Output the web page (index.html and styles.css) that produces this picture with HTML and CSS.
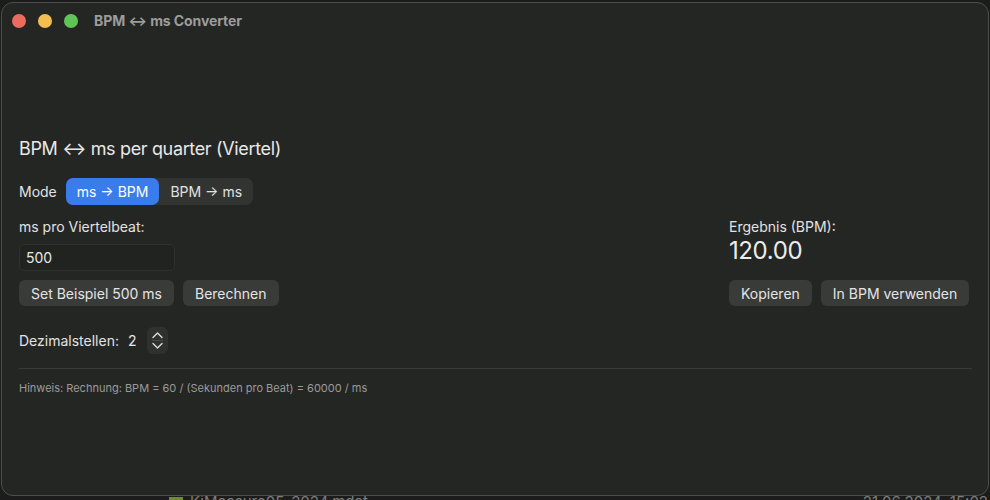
FILE: index.html
```html
<!DOCTYPE html>
<html lang="de">
<head>
<meta charset="utf-8">
<title>BPM ↔ ms Converter</title>
<link rel="stylesheet" href="styles.css">
</head>
<body>
<div class="window">
  <div class="titlebar">
    <span class="light red"></span>
    <span class="light yellow"></span>
    <span class="light green"></span>
    <span class="title">BPM ↔ ms Converter</span>
  </div>
  <div class="content">
    <h1 class="heading">BPM ↔ ms per quarter (Viertel)</h1>
    <div class="mode-row">
      <span class="label">Mode</span>
      <div class="segmented">
        <span class="seg selected">ms → BPM</span>
        <span class="seg">BPM → ms</span>
      </div>
    </div>
    <div class="io">
      <div class="col-left">
        <div class="label">ms pro Viertelbeat:</div>
        <div class="field">500</div>
        <div class="btn-row">
          <button class="btn">Set Beispiel 500 ms</button>
          <button class="btn">Berechnen</button>
        </div>
      </div>
      <div class="col-right">
        <div class="label">Ergebnis (BPM):</div>
        <div class="result">120.00</div>
        <div class="btn-row">
          <button class="btn">Kopieren</button>
          <button class="btn">In BPM verwenden</button>
        </div>
      </div>
    </div>
    <div class="decimals">
      <span class="label">Dezimalstellen:</span>
      <span class="value">2</span>
      <div class="stepper">
        <svg width="21" height="27" viewBox="0 0 21 27">
          <path d="M6 10.5 L10.5 6 L15 10.5" fill="none" stroke="#dcdcdc" stroke-width="1.4" stroke-linecap="round" stroke-linejoin="round"/>
          <line x1="5" y1="13.5" x2="16" y2="13.5" stroke="#454745" stroke-width="1"/>
          <path d="M6 16.5 L10.5 21 L15 16.5" fill="none" stroke="#dcdcdc" stroke-width="1.4" stroke-linecap="round" stroke-linejoin="round"/>
        </svg>
      </div>
    </div>
    <div class="divider"></div>
    <p class="hint">Hinweis: Rechnung: BPM = 60 / (Sekunden pro Beat) = 60000 / ms</p>
  </div>
</div>
<div class="behind">
  <span class="file-icon"></span>
  <span class="file-name">KiMeasure05_2024.mdat</span>
  <span class="file-date">21.06.2024, 15:02</span>
</div>
</body>
</html>
```

FILE: styles.css
```css
html, body {
  margin: 0;
  padding: 0;
}
body {
  width: 990px;
  height: 500px;
  overflow: hidden;
  background: #1b1c1b;
  font-family: Inter, "Noto Sans", "Liberation Sans", sans-serif;
  color: #e6e6e6;
}
.window {
  box-sizing: border-box;
  width: 988px;
  height: 494px;
  margin: 2px 0 0 1px;
  border: 1px solid #4c4e4c;
  border-radius: 12px;
  background: #242624;
  display: flex;
  flex-direction: column;
}
.titlebar {
  height: 35px;
  display: flex;
  align-items: center;
  padding-left: 10px;
  gap: 12px;
}
.light {
  width: 14px;
  height: 14px;
  border-radius: 50%;
}
.red { background: #ec6a5e; }
.yellow { background: #f3be4f; }
.green { background: #61c555; }
.title {
  margin-left: 4px;
  font-size: 14px;
  font-weight: 700;
  color: #9b9c9b;
  letter-spacing: -0.1px;
}
.content {
  padding: 100px 16px 0 17px;
  display: flex;
  flex-direction: column;
}
.heading {
  margin: 0;
  font-size: 18px;
  line-height: 22px;
  font-weight: 400;
  color: #e8e8e8;
  letter-spacing: -0.35px;
}
.label {
  font-size: 14px;
  line-height: 16px;
  color: #e2e2e2;
}
.mode-row {
  margin-top: 18px;
  display: flex;
  align-items: center;
  gap: 9px;
}
.segmented {
  display: flex;
  height: 27px;
  border-radius: 7px;
  background: #323432;
}
.seg {
  display: flex;
  align-items: center;
  padding: 0 11px;
  font-size: 14px;
  color: #e2e2e2;
  border-radius: 7px;
}
.seg.selected {
  background: #3b7ced;
  color: #ffffff;
}
.io {
  margin-top: 14px;
  display: flex;
  justify-content: space-between;
}
.col-left, .col-right {
  display: flex;
  flex-direction: column;
}
.col-right {
  width: 243px;
}
.field {
  margin-top: 9px;
  box-sizing: border-box;
  width: 156px;
  height: 27px;
  border: 1px solid #2f312f;
  border-radius: 5px;
  background: #212321;
  padding: 0 6px;
  display: flex;
  align-items: center;
  font-size: 14px;
  color: #e8e8e8;
}
.btn-row {
  margin-top: 9px;
  display: flex;
  gap: 9px;
}
.col-right .btn-row {
  margin-top: auto;
}
.btn {
  height: 26px;
  padding: 0 12px;
  border: none;
  border-radius: 6px;
  background: #393b39;
  color: #e4e4e4;
  font-family: inherit;
  font-size: 14px;
}
.result {
  margin-top: 2px;
  font-size: 24px;
  line-height: 28px;
  color: #ececec;
  letter-spacing: -0.4px;
}
.decimals {
  margin-top: 21px;
  display: flex;
  align-items: center;
}
.decimals .value {
  margin-left: 9px;
  font-size: 14px;
}
.stepper {
  margin-left: 10px;
  width: 21px;
  height: 27px;
  border-radius: 6px;
  background: #2f312f;
  display: flex;
}
.divider {
  margin-top: 14px;
  height: 1px;
  background: #393b39;
}
.hint {
  margin: 12px 0 0;
  font-size: 11px;
  line-height: 14px;
  color: #9a9b9a;
}
.behind {
  display: flex;
  align-items: flex-start;
  height: 6px;
  overflow: hidden;
  font-size: 15px;
  line-height: 16px;
  color: #7c7d7c;
}
.file-icon {
  margin-left: 169px;
  margin-top: 1px;
  width: 14px;
  height: 12px;
  background: #6d8a3a;
}
.file-name {
  margin-left: 7px;
  margin-top: -2px;
}
.file-date {
  margin-left: auto;
  margin-top: -2px;
  padding-right: 2px;
}
```
